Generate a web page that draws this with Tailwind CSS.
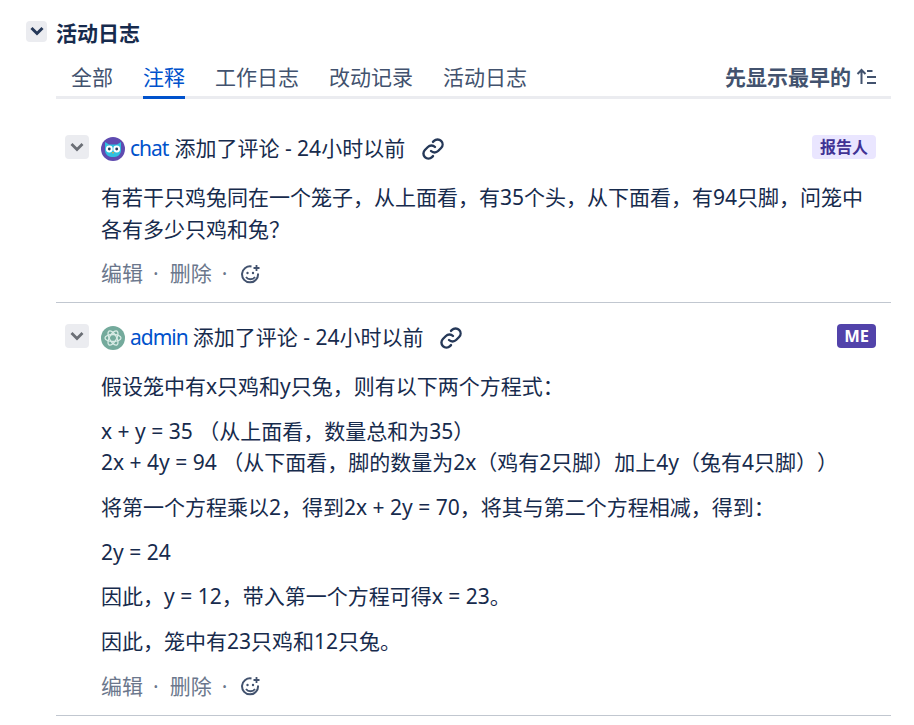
<!DOCTYPE html>
<html lang="zh-CN">
<head>
<meta charset="utf-8">
<script src="https://cdn.jsdelivr.net/npm/@tailwindcss/browser@4"></script>
</head>
<body class="bg-white overflow-hidden">
<div class="w-[914px] h-[725px] overflow-hidden pl-[26px] pr-[23px] pt-[21px] text-[#172b4d] font-['Noto_Sans','Noto_Sans_CJK_SC',sans-serif] text-[21px] leading-[31.5px] [text-spacing-trim:space-all]">
  <div class="flex items-center h-[24px]">
    <button class="w-[21px] h-[21px] rounded-[4px] bg-[#ebecf0] flex items-center justify-center mr-[9px] -mt-[3px]">
      <svg width="16" height="16" viewBox="0 0 16 16" class="-mt-[1px]"><path d="M2.500 5 8 10.500 13.500 5" fill="none" stroke="#253858" stroke-width="3"/></svg>
    </button>
    <h2 class="text-[21px] font-bold leading-[24px]">活动日志</h2>
  </div>
  <div class="ml-[30px] mt-[9px] flex justify-between border-b-[3px] border-[#ebecf0] h-[45px]">
    <div class="flex gap-[30px] text-[#42526e] pl-[15px]">
      <span class="h-[45px] pt-[8px]">全部</span>
      <span class="h-[45px] pt-[8px] text-[#0052cc] border-b-[3px] border-[#0052cc]">注释</span>
      <span class="h-[45px] pt-[8px]">工作日志</span>
      <span class="h-[45px] pt-[8px]">改动记录</span>
      <span class="h-[45px] pt-[8px]">活动日志</span>
    </div>
    <div class="flex items-start pt-[8px] pr-[15px] text-[#42526e] font-bold text-[21px]">
      <span>先显示最早的</span>
      <svg class="ml-[5px] mt-[6px]" width="20" height="17" viewBox="0 0 20 17"><path d="M5.500 16V2M1.500 6l4-4 4 4" fill="none" stroke="#42526e" stroke-width="2"/><path d="M11 3h5.500M11 9h9M11 15h9" stroke="#42526e" stroke-width="2"/></svg>
    </div>
  </div>

  <section class="ml-[30px] mt-[35px] border-b border-[#c1c7d0] h-[169px]">
    <div class="flex items-center h-[30px] relative">
      <button class="w-[24px] h-[24px] rounded-[4px] bg-[#ebecf0] flex items-center justify-center ml-[9px] mr-[12px] -mt-[5px]">
        <svg width="16" height="16" viewBox="0 0 16 16"><path d="M2.500 5 8 10.500 13.500 5" fill="none" stroke="#6b6f76" stroke-width="2.800"/></svg>
      </button>
      <svg width="24" height="24" viewBox="0 0 24 24" class="mr-[5px] shrink-0">
        <circle cx="12" cy="12" r="12" fill="#5f4bb0"/>
        <path d="M4 5l4 2.500h8L20 5v9a6.500 6.500 0 0 1-6.500 6h-3A6.500 6.500 0 0 1 4 14z" fill="#2fc0e0"/>
        <circle cx="8.300" cy="12" r="3.400" fill="#fff"/><circle cx="15.700" cy="12" r="3.400" fill="#fff"/>
        <circle cx="8.300" cy="12" r="1.400" fill="#253858"/><circle cx="15.700" cy="12" r="1.400" fill="#253858"/>
        <path d="M11 15h2l-1 2z" fill="#f5a623"/>
      </svg>
      <span class="text-[#0052cc] tracking-[-1px]">chat</span><span class="ml-[6px]">添加了评论 - 24小时以前</span>
      <svg class="ml-[16px]" width="24" height="24" viewBox="0 0 24 24" fill="none" stroke="#253858" stroke-width="2.400" stroke-linecap="round"><path d="M10 14a5 5 0 0 0 7.100 0l3-3a5 5 0 0 0-7.100-7.100l-1 1"/><path d="M14 10a5 5 0 0 0-7.100 0l-3 3a5 5 0 0 0 7.100 7.100l1-1"/></svg>
      <span class="ml-auto mr-[15px] -mt-[4px] h-[24px] px-[8px] rounded-[4px] bg-[#eae6ff] text-[#403294] text-[16px] font-bold leading-[24px]">报告人</span>
    </div>
    <div class="ml-[45px] mt-[18px]">
      <p class="w-[770px]">有若干只鸡兔同在一个笼子，从上面看，有35个头，从下面看，有94只脚，问笼中各有多少只鸡和兔？</p>
    </div>
    <div class="ml-[45px] mt-[13px] flex items-center text-[#6b778c] h-[32px]">
      <span>编辑</span><span class="ml-[10px] mr-[11px]">·</span><span>删除</span><span class="ml-[10px] mr-[13px]">·</span>
      <svg width="21" height="21" viewBox="0 0 21 21" fill="none" stroke="#42526e" stroke-width="2"><path d="M18 9.500a8 8 0 1 1-6.500-7"/><circle cx="7.500" cy="9" r="1.200" fill="#42526e" stroke="none"/><circle cx="13" cy="9" r="1.200" fill="#42526e" stroke="none"/><path d="M6 13c2 3 7 3 9 0" stroke-width="1.800"/><path d="M16.500 1v6M13.500 4h6" stroke-width="1.800"/></svg>
    </div>
  </section>

  <section class="ml-[30px] mt-[20px] border-b border-[#c1c7d0] h-[393px]">
    <div class="flex items-center h-[30px]">
      <button class="w-[24px] h-[24px] rounded-[4px] bg-[#ebecf0] flex items-center justify-center ml-[9px] mr-[12px] -mt-[5px]">
        <svg width="16" height="16" viewBox="0 0 16 16"><path d="M2.500 5 8 10.500 13.500 5" fill="none" stroke="#6b6f76" stroke-width="2.800"/></svg>
      </button>
      <svg width="24" height="24" viewBox="0 0 24 24" class="mr-[5px] shrink-0">
        <circle cx="12" cy="12" r="12" fill="#74aa9c"/>
        <g fill="none" stroke="#d8ebe5" stroke-width="1.300"><ellipse cx="12" cy="12" rx="8" ry="3.500"/><ellipse cx="12" cy="12" rx="8" ry="3.500" transform="rotate(60 12 12)"/><ellipse cx="12" cy="12" rx="8" ry="3.500" transform="rotate(120 12 12)"/></g>
      </svg>
      <span class="text-[#0052cc] tracking-[-1px]">admin</span><span class="ml-[5px]">添加了评论 - 24小时以前</span>
      <svg class="ml-[16px]" width="24" height="24" viewBox="0 0 24 24" fill="none" stroke="#253858" stroke-width="2.400" stroke-linecap="round"><path d="M10 14a5 5 0 0 0 7.100 0l3-3a5 5 0 0 0-7.100-7.100l-1 1"/><path d="M14 10a5 5 0 0 0-7.100 0l-3 3a5 5 0 0 0 7.100 7.100l1-1"/></svg>
      <span class="ml-auto mr-[15px] -mt-[4px] h-[24px] px-[7px] rounded-[4px] bg-[#5243aa] text-white text-[16.500px] font-bold leading-[24px]">ME</span>
    </div>
    <div class="ml-[45px] mt-[18px] flex flex-col gap-[13.200px]">
      <p>假设笼中有x只鸡和y只兔，则有以下两个方程式：</p>
      <p>x + y = 35 （从上面看，数量总和为35）<br>2x + 4y = 94 （从下面看，脚的数量为2x（鸡有2只脚）加上4y（兔有4只脚））</p>
      <p>将第一个方程乘以2，得到2x + 2y = 70，将其与第二个方程相减，得到：</p>
      <p>2y = 24</p>
      <p>因此，y = 12，带入第一个方程可得x = 23。</p>
      <p>因此，笼中有23只鸡和12只兔。</p>
    </div>
    <div class="ml-[45px] mt-[13px] flex items-center text-[#6b778c] h-[32px]">
      <span>编辑</span><span class="ml-[10px] mr-[11px]">·</span><span>删除</span><span class="ml-[10px] mr-[13px]">·</span>
      <svg width="21" height="21" viewBox="0 0 21 21" fill="none" stroke="#42526e" stroke-width="2"><path d="M18 9.500a8 8 0 1 1-6.500-7"/><circle cx="7.500" cy="9" r="1.200" fill="#42526e" stroke="none"/><circle cx="13" cy="9" r="1.200" fill="#42526e" stroke="none"/><path d="M6 13c2 3 7 3 9 0" stroke-width="1.800"/><path d="M16.500 1v6M13.500 4h6" stroke-width="1.800"/></svg>
    </div>
  </section>
</div>
</body>
</html>
